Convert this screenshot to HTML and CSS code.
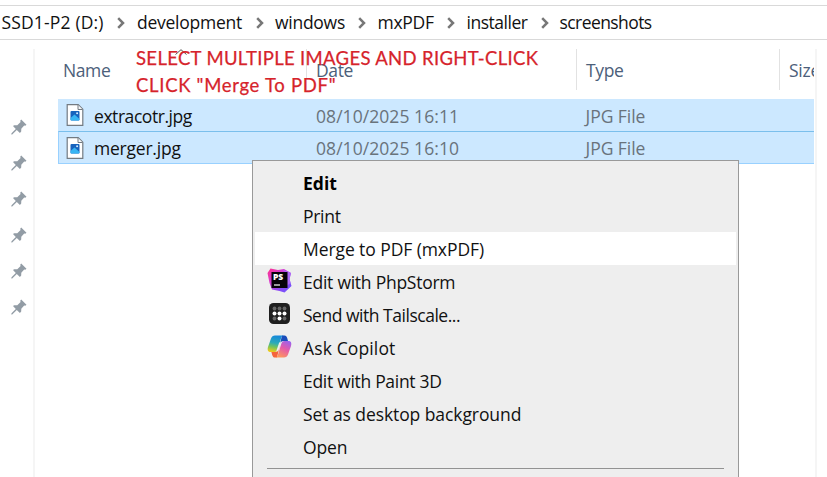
FILE: index.html
```
<!DOCTYPE html>
<html lang="en">
<head>
<meta charset="utf-8">
<title>screenshots</title>
<link rel="stylesheet" href="styles.css">
</head>
<body>
<svg class="defs" aria-hidden="true">
  <defs>
    <symbol id="chevron" viewBox="0 0 8 12"><path d="M1.200 1.200 6 6l-4.800 4.800" fill="none" stroke="#777" stroke-width="2.500"/></symbol>
    <symbol id="pin" viewBox="0 0 16 16"><path d="M10.200.500 15.500 5.800 14.300 6.800 13.200 6.600 10.300 9.700 10.200 12.600 8.900 14 5.800 11 1.200 15.600.300 15.400.500 14.300 4.800 10 2 7 3.200 6.200 6.300 6.200 9.600 3.100 9.200 1.800Z" fill="#929ca5"/></symbol>
    <symbol id="jpg" viewBox="0 0 17 22">
      <path d="M.700.700h11l4.600 4.600v16H.700Z" fill="#fff" stroke="#747b82" stroke-width="1.200"/>
      <path d="M11.500.900v4.600h4.600" fill="#f4f6f8" stroke="#747b82"/>
      <rect x="4" y="7" width="9" height="9.500" rx="1" fill="#1763bd"/>
      <path d="M4 14 8 10.500 13 15v.700a1 1 0 0 1-1 .8H5a1 1 0 0 1-1-1Z" fill="#38b5f3"/>
      <circle cx="10.600" cy="9.200" r="1" fill="#d7efff"/>
    </symbol>
  </defs>
</svg>
<nav class="path">
  <span class="c1">SSD1-P2 (D:)</span><svg><use href="#chevron"/></svg>
  <span class="c2">development</span><svg><use href="#chevron"/></svg>
  <span class="c3">windows</span><svg><use href="#chevron"/></svg>
  <span class="c4">mxPDF</span><svg><use href="#chevron"/></svg>
  <span class="c5">installer</span><svg><use href="#chevron"/></svg>
  <span class="c6">screenshots</span>
</nav>
<div class="main">
  <aside class="pins">
    <svg><use href="#pin"/></svg><svg><use href="#pin"/></svg><svg><use href="#pin"/></svg>
    <svg><use href="#pin"/></svg><svg><use href="#pin"/></svg><svg><use href="#pin"/></svg>
  </aside>
  <section class="files">
    <div class="head">
      <span class="name">Name</span><span class="date">Date</span><span class="type">Type</span><span class="size">Size</span>
      <svg class="sort" viewBox="0 0 12 6"><path d="M.500 5.500 6 .700l5.500 4.800" fill="none" stroke="#555"/></svg>
    </div>
    <div class="row">
      <svg><use href="#jpg"/></svg><span class="fname f1">extracotr.jpg</span><span class="fdate">08/10/2025 16:11</span><span class="ftype">JPG File</span>
    </div>
    <div class="row last">
      <svg><use href="#jpg"/></svg><span class="fname f2">merger.jpg</span><span class="fdate">08/10/2025 16:10</span><span class="ftype">JPG File</span>
    </div>
  </section>
</div>
<div class="note"><div class="n1">SELECT MULTIPLE IMAGES AND RIGHT-CLICK</div><div class="n2">CLICK "Merge To PDF"</div></div>
<div class="menu">
  <div class="item bold"><i></i><span>Edit</span></div>
  <div class="item"><i></i><span class="m1">Print</span></div>
  <div class="item hover"><i></i><span class="m2">Merge to PDF (mxPDF)</span></div>
  <div class="item"><i><svg viewBox="0 0 25 25">
    <defs><linearGradient id="ps" x1="0" y1="0" x2="1" y2="1"><stop offset="0" stop-color="#ff318c"/><stop offset=".35" stop-color="#d63bd0"/><stop offset=".7" stop-color="#884bf5"/><stop offset="1" stop-color="#6b57ff"/></linearGradient></defs>
    <path d="M.500 5 3.500.500 11 2 17 1l7 4-1.500 6L24.500 18l-7 6.500-5-1.500L5 21.500 2.500 15Z" fill="url(#ps)"/>
    <path d="M15 1.500 24 5l-1.500 6 1 4-4 3V5Z" fill="#b06bf7"/>
    <rect x="4.500" y="4" width="16" height="16" fill="#070309"/>
    <text x="6" y="11.500" class="pstext">PS</text><path d="M7 17h6" stroke="#fff" stroke-width="1.200"/></svg></i><span class="m3">Edit with PhpStorm</span></div>
  <div class="item"><i><svg viewBox="0 0 25 25">
    <rect x="2" y="2" width="21" height="21" rx="4.500" fill="#1f1f1f"/>
    <g fill="#666"><circle cx="7.500" cy="7.500" r="1.900"/><circle cx="12.500" cy="7.500" r="1.900"/><circle cx="17.500" cy="7.500" r="1.900"/><circle cx="7.500" cy="17.500" r="1.900"/><circle cx="17.500" cy="17.500" r="1.900"/></g>
    <g fill="#fff"><circle cx="7.500" cy="12.500" r="2"/><circle cx="12.500" cy="12.500" r="2"/><circle cx="17.500" cy="12.500" r="2"/><circle cx="12.500" cy="17.500" r="2"/></g></svg></i><span class="m4">Send with Tailscale...</span></div>
  <div class="item"><i><svg viewBox="0 0 25 25">
    <defs>
      <linearGradient id="ca" x1=".5" y1="0" x2=".3" y2="1"><stop offset="0" stop-color="#1688dc"/><stop offset=".45" stop-color="#2cabb8"/><stop offset=".7" stop-color="#75c45a"/><stop offset="1" stop-color="#f3cb19"/></linearGradient>
      <linearGradient id="cb" x1=".8" y1="0" x2=".3" y2="1"><stop offset="0" stop-color="#9b62ee"/><stop offset=".45" stop-color="#e45aaa"/><stop offset="1" stop-color="#ff9a5a"/></linearGradient>
    </defs>
    <path d="M15 1.500h2.500c1.500 0 2.200 1 2.700 2.600L21 7h-4.500c-2 0-2.800 1-3.300 2.700L12 14Z" fill="#194cba"/>
    <path d="M10 23.500H8c-1.500 0-2.300-1-2.800-2.600L4.400 18h4c2 0 2.800-1 3.300-2.700L13 11Z" fill="#f5653c"/>
    <path d="M8 1.500h9c-1.700 0-2.500 1.200-3 3L10.800 15c-.6 2-1.400 3-3.400 3H3.500C.800 18 .200 15.800 1 13L4 4.500C4.700 2.400 6 1.500 8 1.500Z" fill="url(#ca)"/>
    <path d="M17 23.500H8c1.700 0 2.500-1.200 3-3L14.200 10c.6-2 1.400-3 3.400-3h3.900c2.700 0 3.300 2.200 2.500 5l-3 8.500c-.700 2.100-2 3-4 3Z" fill="url(#cb)"/>
    <path d="M14.200 8.500h-2L9.300 17h1.700Z" fill="#eee"/></svg></i><span class="m5">Ask Copilot</span></div>
  <div class="item"><i></i><span class="m6">Edit with Paint 3D</span></div>
  <div class="item"><i></i><span class="m7">Set as desktop background</span></div>
  <div class="item"><i></i><span class="m8">Open</span></div>
  <hr>
</div>
</body>
</html>
```
FILE: styles.css
```
* { box-sizing: border-box; }
body { margin: 0; width: 827px; height: 477px; overflow: hidden; position: relative; background: #fff; font: 17.5px/24px "Open Sans", "Noto Sans", sans-serif; color: #111; white-space: nowrap; }
.defs { position: absolute; width: 0; height: 0; }
svg { display: block; flex: none; }

.path { height: 35px; margin-top: 5px; border-top: 1px solid #d9d9d9; border-bottom: 1px solid #d9d9d9; display: flex; align-items: center; padding: 0 0 1px 1.500px; }
.path span { flex: none; }
.path svg { width: 8px; height: 12px; margin-top: 2px; }
.c1 { width: 115.5px; letter-spacing: .16px; }
.c2 { width: 118.5px; margin-left: 12px; letter-spacing: -.25px; }
.c3 { width: 83px; margin-left: 11.5px; letter-spacing: -.27px; }
.c4 { width: 69px; margin-left: 11.5px; letter-spacing: -.28px; }
.c5 { width: 74px; margin-left: 12px; letter-spacing: -.48px; }
.c6 { margin-left: 11px; letter-spacing: -.58px; }

.main { display: flex; margin-top: 9px; height: 428px; }
.pins { width: 35px; border-right: 2px solid #f5f5f5; padding: 70px 0 0 11px; display: flex; flex-direction: column; gap: 20px; }
.pins svg { width: 16px; height: 16px; }
.files { width: 782px; border-right: 2px solid #f5f5f5; padding: 0 1px 0 23px; }
.head { height: 41px; margin-bottom: 9px; display: flex; color: #4c607a; line-height: 43px; position: relative; overflow: hidden; }
.name { width: 248px; padding-left: 5px; letter-spacing: -.4px; }
.date { width: 270px; padding-left: 9px; border-left: 1px solid #e2e2e2; letter-spacing: -.38px; }
.type { width: 203px; padding-left: 9px; border-left: 1px solid #e2e2e2; letter-spacing: -.36px; }
.size { width: 35px; flex: none; overflow: hidden; padding-left: 9px; border-left: 1px solid #e2e2e2; letter-spacing: -.26px; }
.sort { position: absolute; left: 117px; top: 0; width: 12px; height: 6px; }
.row { height: 32px; display: flex; align-items: center; background: #cce8ff; padding-left: 8px; }
.row.last { height: 33px; border: solid #99d1ff; border-width: 1px 0 1px 1px; border-top-color: #7abfec; padding-left: 7px; }
.row svg { width: 18px; height: 22px; }
.fname { width: 222px; margin: 1px 0 0 10px; }
.f1 { letter-spacing: -.44px; }
.f2 { letter-spacing: -.22px; }
.fdate { width: 269.5px; margin-top: 1px; color: #69737c; letter-spacing: .06px; }
.ftype { margin-top: 1px; color: #69737c; letter-spacing: -.05px; }

.note { position: absolute; left: 136px; top: 45px; color: #d6232b; font: 18.5px/27px Lato, "Open Sans", sans-serif; -webkit-text-stroke: .25px #d6232b; }
.n1 { letter-spacing: .33px; }
.n2 { letter-spacing: .7px; }

.menu { position: absolute; left: 252px; top: 160px; width: 487px; height: 330px; background: #eee; border: 1px solid #999; padding: 5px 2px 0; }
.item { height: 33px; display: flex; align-items: center; }
.item.hover { background: #fff; }
.item i { width: 48px; padding-left: 11.5px; flex: none; }
.item i svg { width: 25px; height: 25px; margin-top: -2px; }
.item span { padding-top: 1px; }
.bold { font-weight: 700; color: #000; }
.m1 { letter-spacing: -.3px; }
.m2 { letter-spacing: -.08px; }
.m3 { letter-spacing: -.25px; }
.m4 { letter-spacing: -.48px; }
.m5 { letter-spacing: .13px; }
.m6 { letter-spacing: -.3px; }
.m7 { letter-spacing: -.08px; }
.m8 { letter-spacing: -.1px; }
.pstext { font: 800 8.500px "Open Sans", sans-serif; fill: #fff; }
hr { border: 0; height: 1px; background: #929292; margin: 5px 12px 0; }
```
